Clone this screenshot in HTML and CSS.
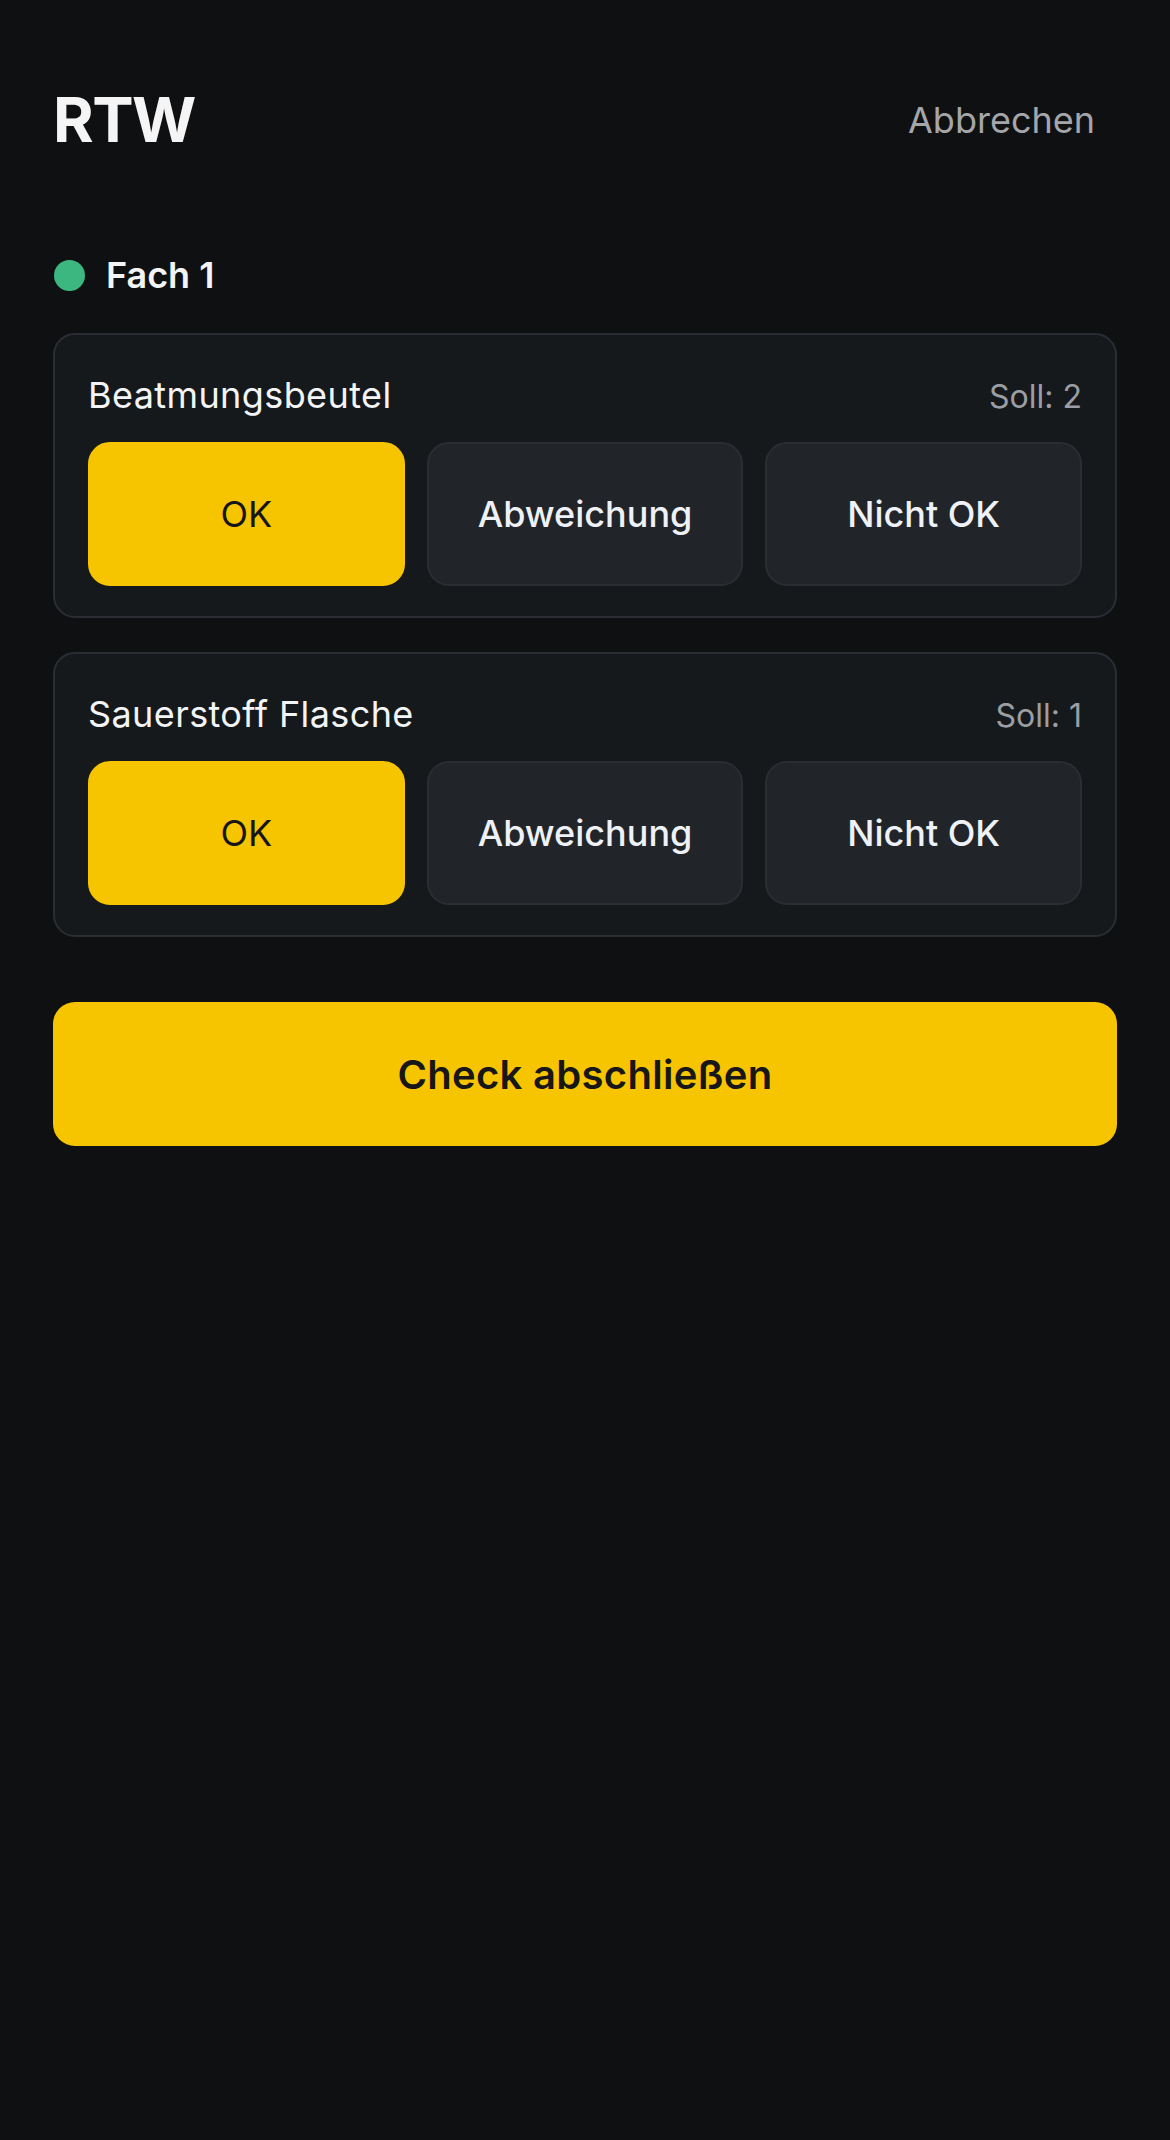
FILE: index.html
```html
<!DOCTYPE html>
<html lang="de">
<head>
    <meta charset="UTF-8">
    <meta name="viewport" content="width=device-width, initial-scale=1.0">
    <title>RTW Check</title>
    <link rel="stylesheet" href="styles.css">
</head>
<body>
    <div class="page">
        <header class="top-bar">
            <h1>RTW</h1>
            <button class="cancel">Abbrechen</button>
        </header>

        <div class="section-title">
            <span class="dot"></span>
            <h2>Fach 1</h2>
        </div>

        <div class="item-card">
            <div class="item-head">
                <span class="item-name">Beatmungsbeutel</span>
                <span class="item-soll">Soll: 2</span>
            </div>
            <div class="choices">
                <button class="choice active">OK</button>
                <button class="choice">Abweichung</button>
                <button class="choice">Nicht OK</button>
            </div>
        </div>

        <div class="item-card">
            <div class="item-head">
                <span class="item-name">Sauerstoff Flasche</span>
                <span class="item-soll">Soll: 1</span>
            </div>
            <div class="choices">
                <button class="choice active">OK</button>
                <button class="choice">Abweichung</button>
                <button class="choice">Nicht OK</button>
            </div>
        </div>

        <button class="finish">Check abschließen</button>
    </div>
</body>
</html>
```

FILE: styles.css
```css
* {
    box-sizing: border-box;
    margin: 0;
    padding: 0;
}
body {
    font-family: Inter, "Noto Sans", sans-serif;
    background: #0f1012;
    color: #f3f4f6;
    min-height: 100vh;
}
button {
    font-family: inherit;
    border: none;
    cursor: pointer;
}
.page {
    padding: 82px 53px;
    display: flex;
    flex-direction: column;
}
.top-bar {
    display: flex;
    justify-content: space-between;
    align-items: center;
    height: 76px;
}
.top-bar h1 {
    font-size: 62px;
    font-weight: 700;
    line-height: 76px;
    letter-spacing: -1.5px;
    color: #f5f5f6;
}
.cancel {
    background: none;
    color: #a4a6aa;
    font-size: 36px;
    line-height: 44px;
    padding: 0 22px;
}
.section-title {
    display: flex;
    align-items: center;
    gap: 21px;
    margin-top: 95px;
    margin-bottom: 36px;
}
.dot {
    width: 31px;
    height: 31px;
    border-radius: 50%;
    background: #3bb77f;
    margin-left: 1px;
}
.section-title h2 {
    font-size: 36px;
    font-weight: 600;
    line-height: 44px;
}
.item-card {
    background: #16191c;
    border: 2px solid #2a2e32;
    border-radius: 22px;
    padding: 38px 33px 30px;
    margin-bottom: 34px;
}
.item-head {
    display: flex;
    justify-content: space-between;
    align-items: baseline;
    margin-bottom: 25px;
}
.item-name {
    font-size: 36px;
    line-height: 44px;
    letter-spacing: 0.4px;
    color: #f3f4f6;
}
.item-soll {
    font-size: 32px;
    color: #9b9ea3;
}
.choices {
    display: grid;
    grid-template-columns: repeat(3, 1fr);
    gap: 22px;
}
.choice {
    height: 144px;
    border-radius: 22px;
    background: #212529;
    border: 2px solid #2a2e33;
    color: #eef1f5;
    font-size: 36px;
    font-weight: 500;
}
.choice.active {
    background: #f7c400;
    border-color: #f7c400;
    color: #16161a;
    font-weight: 400;
}
.finish {
    margin-top: 31px;
    height: 144px;
    border-radius: 22px;
    background: #f7c400;
    color: #17171a;
    font-size: 40px;
    font-weight: 600;
    letter-spacing: 0.3px;
}
```
